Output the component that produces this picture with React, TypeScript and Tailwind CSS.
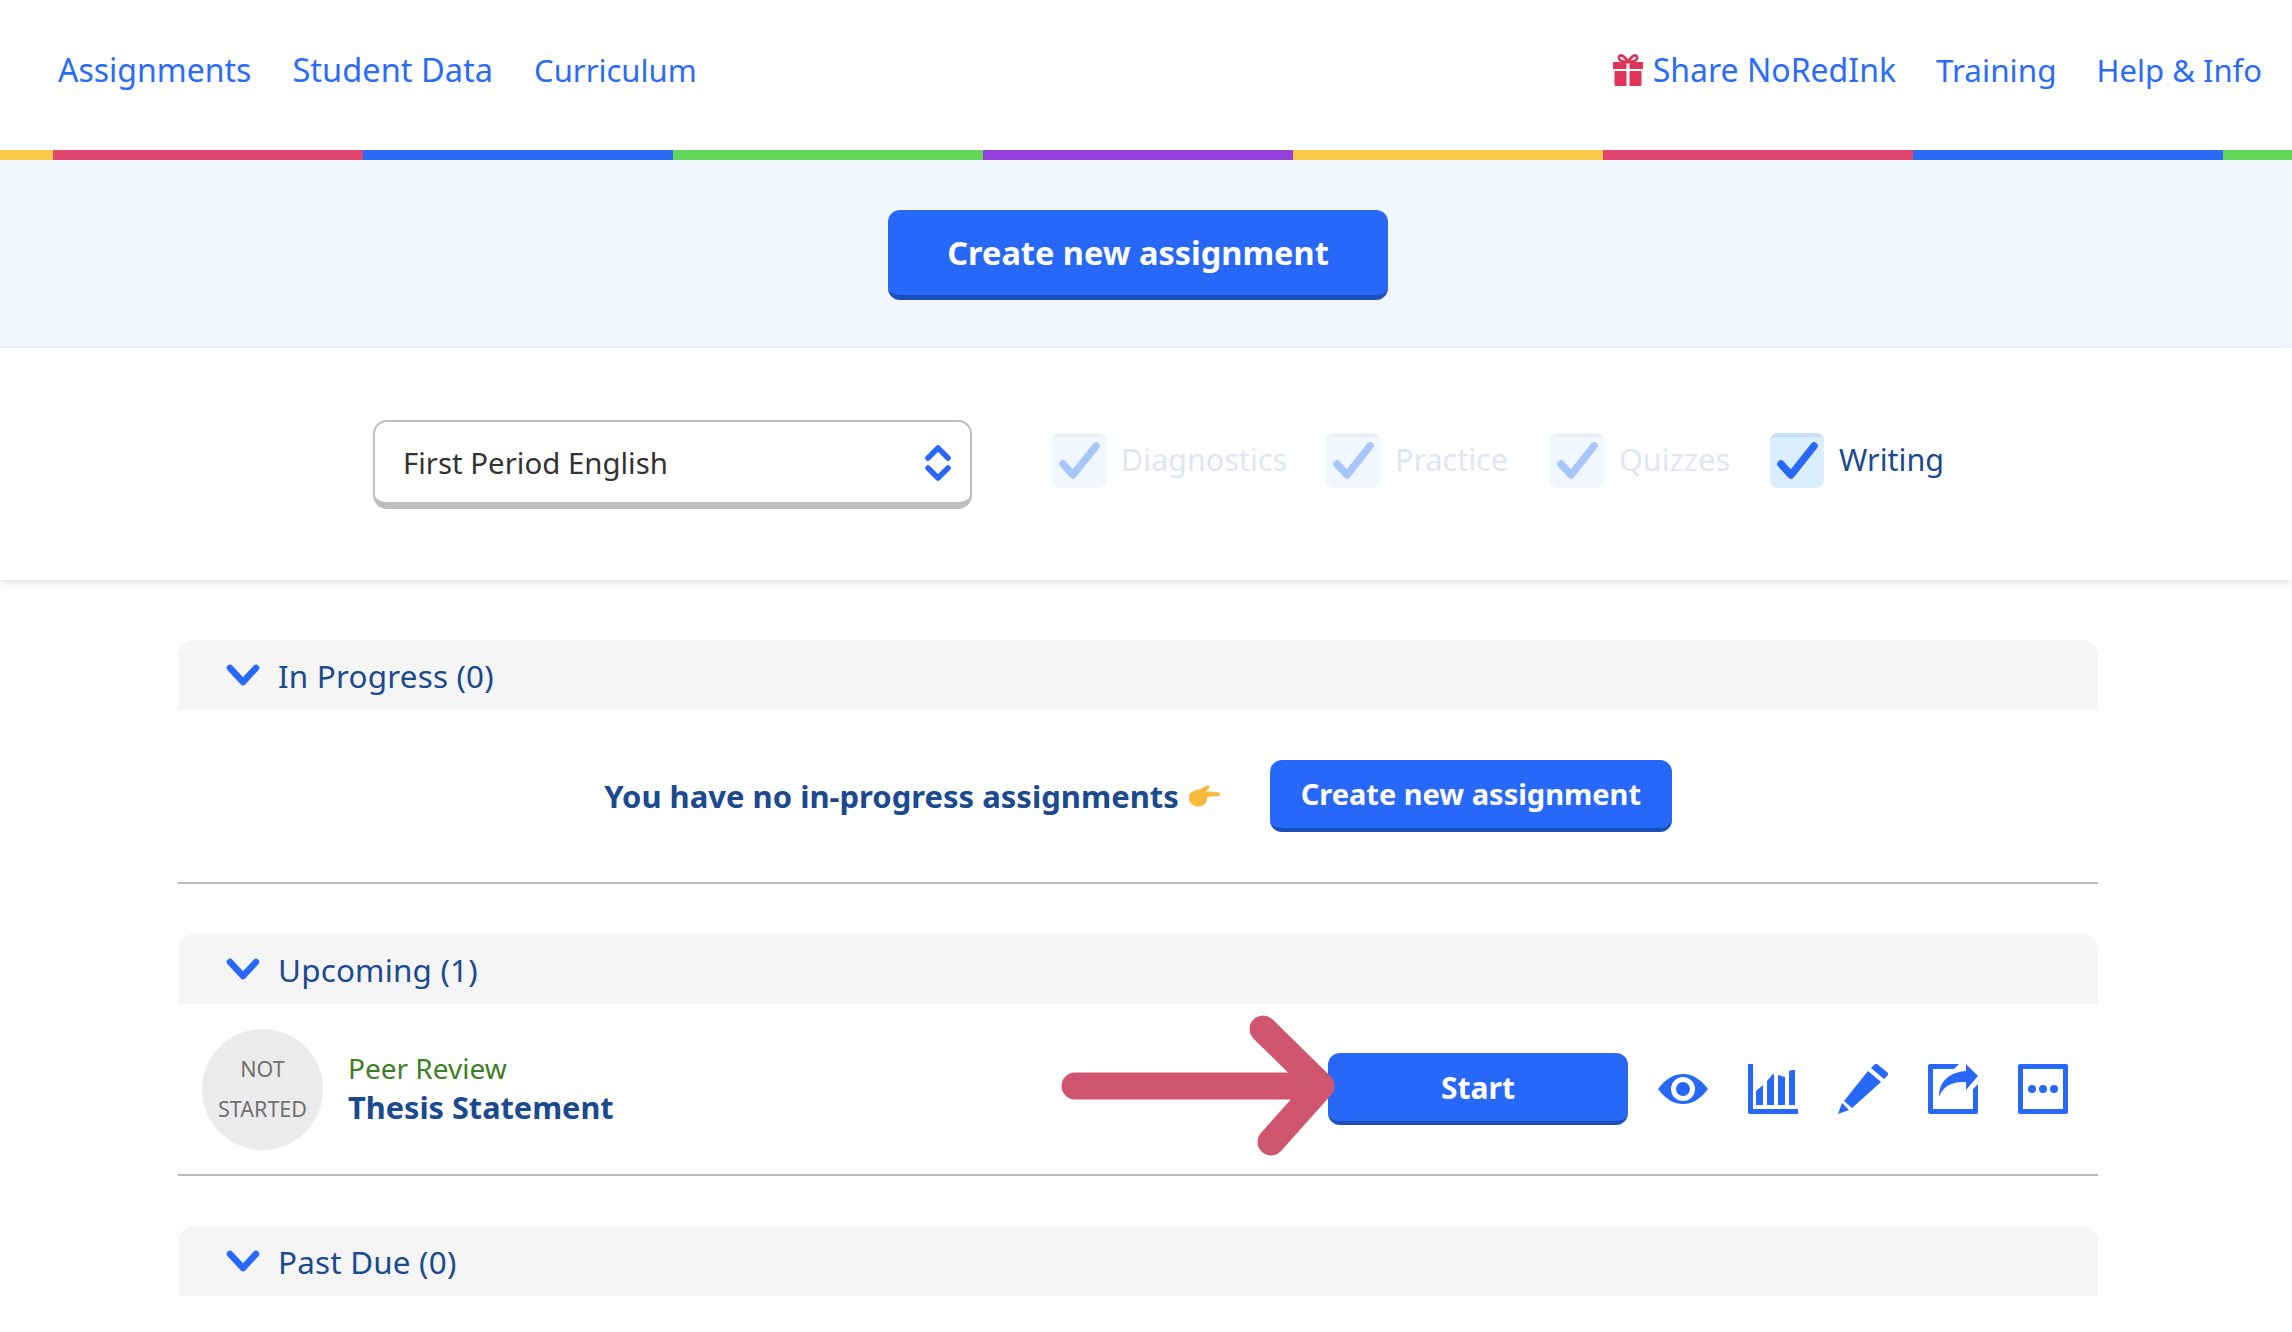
import React from "react";

const stripeColors = [
  { color: "bg-[#fac746]", width: "w-[53px]" },
  { color: "bg-[#e2466d]", width: "w-[310px]" },
  { color: "bg-[#2a6bf8]", width: "w-[310px]" },
  { color: "bg-[#62d658]", width: "w-[310px]" },
  { color: "bg-[#9440dc]", width: "w-[310px]" },
  { color: "bg-[#fac746]", width: "w-[310px]" },
  { color: "bg-[#e2466d]", width: "w-[310px]" },
  { color: "bg-[#2a6bf8]", width: "w-[310px]" },
  { color: "bg-[#62d658]", width: "flex-1" },
];

const filters = [
  { label: "Diagnostics", active: false, width: "w-[274px]" },
  { label: "Practice", active: false, width: "w-[224px]" },
  { label: "Quizzes", active: false, width: "w-[220px]" },
  { label: "Writing", active: true, width: "w-[190px]" },
];

const Chevron = () => (
  <svg width="34" height="24" viewBox="0 0 34 24" className="shrink-0">
    <path d="M4 5 L17 19 L30 5" fill="none" stroke="#2768f9" strokeWidth="6.5" strokeLinecap="round" strokeLinejoin="round" />
  </svg>
);

const Gift = () => (
  <svg width="30" height="32" viewBox="0 0 30 32" className="shrink-0">
    <path d="M15 8 C11 1 7 0 6 3 C5 6 9 8 15 8 C21 8 25 6 24 3 C23 0 19 1 15 8 Z" fill="none" stroke="#dd3458" strokeWidth="2.6" />
    <path d="M0 8 H13.5 V15 H0 Z M16.5 8 H30 V15 H16.5 Z M1.5 17 H13.5 V32 H3 Q1.5 32 1.5 30.5 Z M16.5 17 H28.5 V30.5 Q28.5 32 27 32 H16.5 Z" fill="#dd3458" />
  </svg>
);

const Section = ({ title }: { title: string }) => (
  <div className="h-[70px] bg-[#f5f5f5] rounded-t-[16px] flex items-center pl-[48px] gap-[18px]">
    <Chevron />
    <span className="text-[31.4px] leading-none text-[#1b4a8f] tracking-[0.2px] mt-[2px]">{title}</span>
  </div>
);

const FilterBox = ({ active }: { active: boolean }) => (
  <div className={`w-[54px] h-[55px] shrink-0 rounded-[8px] border-t-4 ${active ? "bg-[#d9efff] border-[#c6e1f2]" : "bg-[#f0f7ff] border-[#e9f1f8]"}`}>
    <svg width="54" height="51" viewBox="0 0 54 51">
      <path d="M11 27 L21 38 L44 9" fill="none" stroke={active ? "#2768f9" : "#a9c6fc"} strokeWidth="7.5" strokeLinecap="round" strokeLinejoin="round" />
    </svg>
  </div>
);

const ActionIcons = () => (
  <div className="flex items-center gap-[40px] ml-[30px]">
    <svg width="50" height="50" viewBox="0 0 50 50">
      <path fillRule="evenodd" fill="#2768f9" d="M0 25 C8 14 17 10 25 10 C33 10 42 14 50 25 C42 36 33 40 25 40 C17 40 8 36 0 25 Z M25 13 A12 12 0 1 0 25 37 A12 12 0 1 0 25 13 Z" />
      <circle cx="25" cy="25" r="7" fill="#2768f9" />
    </svg>
    <svg width="50" height="50" viewBox="0 0 50 50">
      <path fill="#2768f9" d="M0 0 H5 V45 H50 V50 H2 Q0 50 0 48 Z M8 27 L15 21 V41 H8 Z M19 17 L25 10 H26 V41 H19 Z M30 11 L37 13 V41 H30 Z M41 7 L44 6 H47 V41 H41 Z" />
    </svg>
    <svg width="50" height="50" viewBox="0 0 50 50">
      <path fill="#2768f9" d="M37 0 H39 L50 9 V11 L46 15 L33 4 Z M30 7 L43 18 L14 44 L6 37 Z M4 39 L11 46 L0 50 Z" />
    </svg>
    <svg width="50" height="50" viewBox="0 0 50 50">
      <path fill="#2768f9" d="M2 0 H31 L26 5 H5 V45 H45 V25 L50 20 V48 Q50 50 48 50 H2 Q0 50 0 48 V2 Q0 0 2 0 Z" />
      <path fill="#2768f9" d="M38 0 L50 12 L38 26 V18 C24 17 15 22 11 33 C11 17 22 8 38 7 Z" />
    </svg>
    <svg width="50" height="50" viewBox="0 0 50 50">
      <path fillRule="evenodd" fill="#2768f9" d="M2 0 H48 Q50 0 50 2 V48 Q50 50 48 50 H2 Q0 50 0 48 V2 Q0 0 2 0 Z M5 5 V45 H45 V5 Z" />
      <circle cx="14" cy="25" r="4" fill="#2768f9" />
      <circle cx="25" cy="25" r="4" fill="#2768f9" />
      <circle cx="36" cy="25" r="4" fill="#2768f9" />
    </svg>
  </div>
);

export default function App() {
  return (
    <div className="min-h-[1332px] bg-white overflow-hidden font-['Noto_Sans',sans-serif]">
      <nav className="h-[150px] flex items-center justify-between pl-[58px] pr-[30px] pb-[10px] text-[#2a6bf8] text-[32px]">
        <div className="flex items-center gap-[41px]">
          <span>Assignments</span>
          <span className="text-[32.6px]">Student Data</span>
          <span className="text-[31px]">Curriculum</span>
        </div>
        <div className="flex items-center gap-[40px]">
          <span className="flex items-center gap-[10px]">
            <Gift />
            Share NoRedInk
          </span>
          <span className="text-[31.5px]">Training</span>
          <span className="text-[31px]">Help &amp; Info</span>
        </div>
      </nav>

      <div className="flex h-[10px]">
        {stripeColors.map((s, i) => (
          <div key={i} className={`${s.color} ${s.width}`} />
        ))}
      </div>

      <div className="h-[188px] bg-[#f0f7ff] flex items-start justify-center pt-[50px] pr-[16px]">
        <button className="w-[500px] h-[90px] pt-[2px] rounded-[12px] bg-[#2768f9] border-b-[5px] border-[#1a4fbc] text-white text-[32.5px] font-bold">
          Create new assignment
        </button>
      </div>

      <div className="relative h-[232px] bg-white shadow-[0_2px_8px_rgba(0,0,0,0.14)] flex items-start pl-[373px] pt-[72px]">
        <div className="w-[599px] h-[89px] pt-[2px] rounded-[14px] border-2 border-b-[7px] border-[#bfbfbf] flex items-center justify-between pl-[28px] pr-[18px] text-[29.4px] text-[#333333]">
          <span>First Period English</span>
          <svg width="28" height="40" viewBox="0 0 28 40">
            <path d="M4 15 L14 5 L24 15 M4 25 L14 35 L24 25" fill="none" stroke="#2768f9" strokeWidth="5.5" strokeLinecap="round" strokeLinejoin="round" />
          </svg>
        </div>
        <div className="flex items-center ml-[80px] mt-[13px]">
          {filters.map((f) => (
            <div key={f.label} className={`flex items-center gap-[15px] ${f.width}`}>
              <FilterBox active={f.active} />
              <span className={`text-[30.5px] -mt-[2px] ${f.active ? "text-[#1b4a8f]" : "text-[#dfe6f1]"}`}>{f.label}</span>
            </div>
          ))}
        </div>
      </div>

      <main className="ml-[178px] w-[1920px] pt-[60px]">
        <Section title="In Progress (0)" />
        <div className="h-[174px] border-b-2 border-[#bbbbbb] flex items-center justify-center gap-[50px]">
          <span className="flex items-center gap-[9px] text-[#1b4a8f] text-[31px] font-bold">
            You have no in-progress assignments
            <svg width="32" height="24" viewBox="0 0 34 24">
              <path fill="#f9b93c" d="M1 12 C2 7 7 6 12 5 L20 1 C23 0 24 3 21 5 L19 7 L32 8 C35 9 35 12 32 12 L20 13 C21 17 19 21 14 23 C7 24 0 20 1 12 Z" />
            </svg>
          </span>
          <button className="w-[402px] h-[72px] rounded-[12px] bg-[#2768f9] border-b-[4px] border-[#1a4fbc] text-white text-[29px] font-bold">
            Create new assignment
          </button>
        </div>

        <div className="mt-[50px]">
          <Section title="Upcoming (1)" />
        </div>
        <div className="relative h-[172px] border-b-2 border-[#bbbbbb] flex items-center pl-[24px] pr-[30px]">
          <div className="w-[121px] h-[121px] rounded-full bg-[#ebebeb] flex flex-col items-center justify-center text-[21.5px] leading-[40px] text-[#707070]">
            <span>NOT</span>
            <span>STARTED</span>
          </div>
          <div className="ml-[25px] flex flex-col -mt-[3px]">
            <span className="text-[28px] leading-[38px] text-[#3e7f23]">Peer Review</span>
            <span className="text-[30.7px] leading-[40px] font-bold text-[#1b4a8f]">Thesis Statement</span>
          </div>
          <div className="ml-auto flex items-center">
            <button className="w-[300px] h-[72px] rounded-[12px] bg-[#2768f9] border-b-[4px] border-[#1a4fbc] text-white text-[30px] font-bold">
              Start
            </button>
            <ActionIcons />
          </div>
          <svg width="280" height="142" viewBox="0 0 280 142" className="absolute left-[881px] top-[10px]">
            <path d="M16 72 H262 M204 15 L262 72 L212 128" fill="none" stroke="#d0556f" strokeWidth="27" strokeLinecap="round" strokeLinejoin="round" />
          </svg>
        </div>

        <div className="mt-[50px]">
          <Section title="Past Due (0)" />
        </div>
      </main>
    </div>
  );
}
